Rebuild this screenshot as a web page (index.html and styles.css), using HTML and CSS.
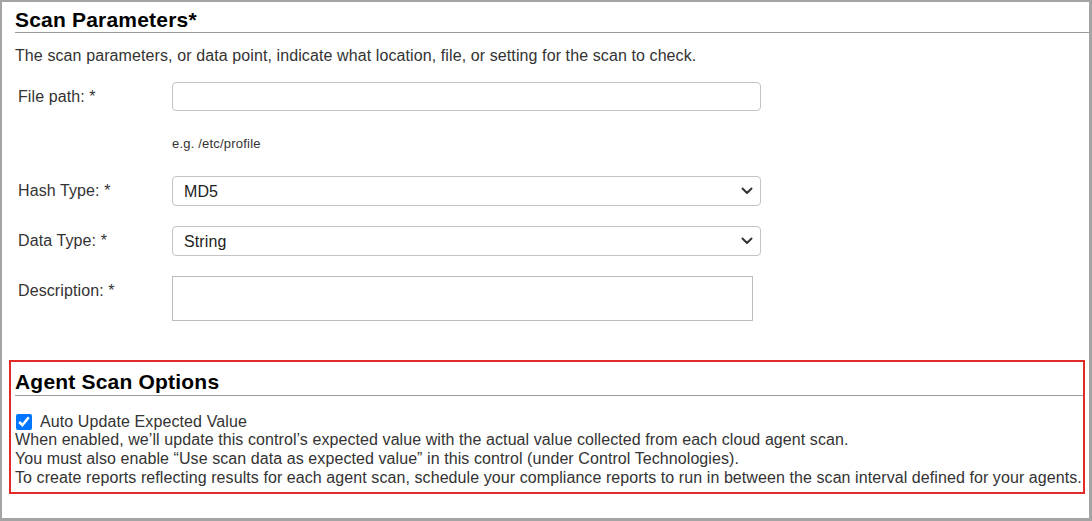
FILE: index.html
```html
<!DOCTYPE html>
<html lang="en">
<head>
<meta charset="utf-8">
<title>Scan Parameters</title>
<link rel="stylesheet" href="styles.css">
</head>
<body>
<div class="frame">
  <section class="params">
    <h2 class="section-title">Scan Parameters*</h2>
    <p class="intro">The scan parameters, or data point, indicate what location, file, or setting for the scan to check.</p>
    <div class="form">
      <div class="row row-path">
        <label class="label" for="fp">File path: *</label>
        <input id="fp" class="field text-field" type="text">
      </div>
      <div class="hint">e.g. /etc/profile</div>
      <div class="row row-hash">
        <label class="label" for="ht">Hash Type: *</label>
        <div class="select-wrap">
          <select id="ht" class="field select-field"><option>MD5</option></select>
          <svg class="chevron" width="12" height="8" viewBox="0 0 12 8"><path d="M1.5 1.5 L6 6 L10.5 1.5" fill="none" stroke="#333" stroke-width="2" stroke-linecap="round" stroke-linejoin="round"/></svg>
        </div>
      </div>
      <div class="row row-data">
        <label class="label" for="dt">Data Type: *</label>
        <div class="select-wrap">
          <select id="dt" class="field select-field"><option>String</option></select>
          <svg class="chevron" width="12" height="8" viewBox="0 0 12 8"><path d="M1.5 1.5 L6 6 L10.5 1.5" fill="none" stroke="#333" stroke-width="2" stroke-linecap="round" stroke-linejoin="round"/></svg>
        </div>
      </div>
      <div class="row row-desc">
        <label class="label" for="ds">Description: *</label>
        <textarea id="ds" class="area"></textarea>
      </div>
    </div>
  </section>
  <section class="agent">
    <h2 class="section-title">Agent Scan Options</h2>
    <div class="agent-body">
      <label class="check-row"><input type="checkbox" class="check" checked><span>Auto Update Expected Value</span></label>
      <p class="note">When enabled, we’ll update this control’s expected value with the actual value collected from each cloud agent scan.</p>
      <p class="note">You must also enable “Use scan data as expected value” in this control (under Control Technologies).</p>
      <p class="note">To create reports reflecting results for each agent scan, schedule your compliance reports to run in between the scan interval defined for your agents.</p>
    </div>
  </section>
</div>
</body>
</html>
```
FILE: styles.css
```css
* { box-sizing: border-box; }
html, body { margin: 0; padding: 0; background: #fff; }
body { font-family: "Liberation Sans", Arial, sans-serif; color: #333; }

.frame {
  width: 1092px;
  height: 521px;
  border: 2px solid #a4a4a4;
  border-right-width: 3px;
  border-bottom-width: 3px;
  background: #fff;
  overflow: hidden;
}

.params { padding-left: 13px; }

.section-title {
  margin: 0;
  padding-top: 6px;
  font-size: 21px;
  line-height: 24px;
  font-weight: bold;
  letter-spacing: 0.2px;
  color: #000;
  border-bottom: 1px solid #9a9a9a;
}

.intro {
  margin: 14px 0 0 0;
  font-size: 16px;
  line-height: 18px;
  letter-spacing: 0.1px;
  color: #333;
}

.form { margin-top: 17px; }

.row { display: flex; align-items: flex-start; }
.label {
  width: 157px;
  flex: none;
  padding: 6px 0 0 3px;
  font-size: 16px;
  line-height: 18px;
  letter-spacing: 0.1px;
  color: #333;
}

.field {
  width: 589px;
  border: 1px solid #c4c4c4;
  border-radius: 4px;
  background: #fff;
  font-family: "Liberation Sans", Arial, sans-serif;
  font-size: 16px;
  letter-spacing: 0.1px;
  color: #222;
  outline: none;
}
.text-field { height: 29px; padding: 0 11px; }

.hint {
  margin: 25px 0 0 157px;
  font-size: 13px;
  line-height: 16px;
  letter-spacing: 0.2px;
  color: #333;
}

.row-hash { margin-top: 24px; }
.row-data { margin-top: 20px; }
.row-desc { margin-top: 20px; }

.select-wrap { position: relative; width: 589px; }
.select-field {
  display: block;
  height: 30px;
  padding: 0 30px 0 11px;
  appearance: none;
  -webkit-appearance: none;
}
.chevron {
  position: absolute;
  right: 8px;
  top: 11px;
  pointer-events: none;
}

.area {
  display: block;
  width: 581px;
  height: 45px;
  border: 1px solid #bcbcbc;
  border-radius: 0;
  resize: none;
  outline: none;
  font-family: "Liberation Sans", Arial, sans-serif;
}

.agent {
  margin: 39px 0 0 7px;
  width: 1076px;
  height: 134px;
  border: 2px solid #e22a28;
  padding: 2px 0 0 4px;
}
.agent .section-title { padding-top: 6px; padding-bottom: 1px; }

.agent-body { padding-top: 16px; }

.check-row {
  display: flex;
  align-items: center;
  height: 19px;
  font-size: 16px;
  letter-spacing: 0.1px;
  color: #333;
}
.check {
  width: 16px;
  height: 16px;
  margin: 0 8px 0 1px;
  accent-color: #0075ff;
}

.note {
  margin: 0;
  font-size: 16px;
  line-height: 18.75px;
  letter-spacing: 0.08px;
  white-space: nowrap;
  color: #333;
}
```
